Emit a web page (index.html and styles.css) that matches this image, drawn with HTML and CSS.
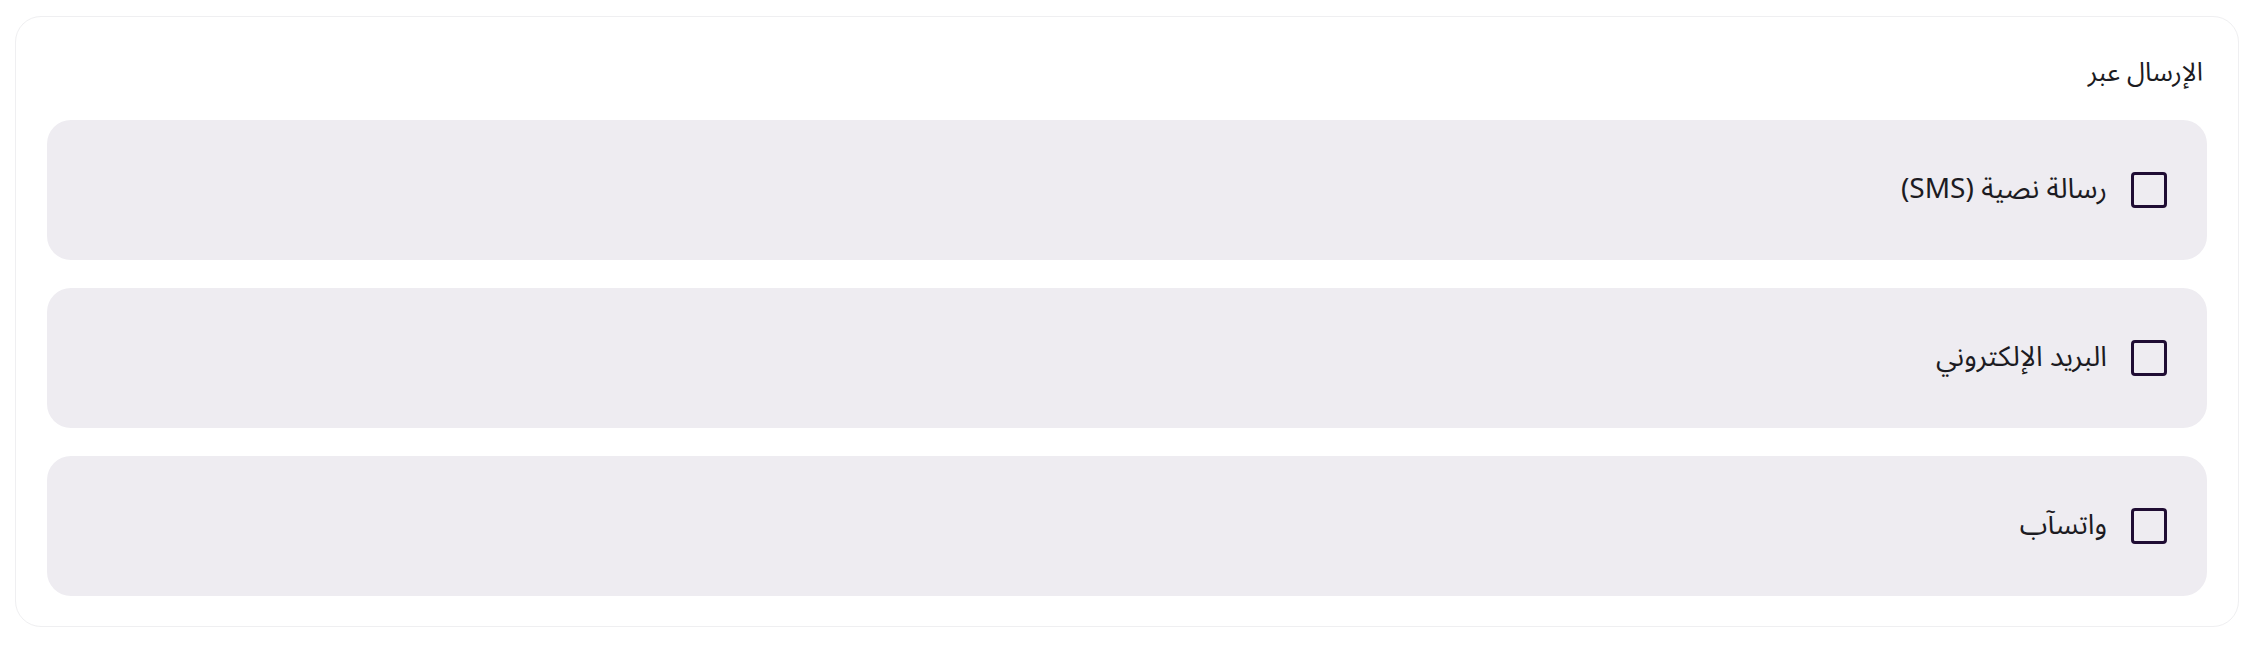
FILE: index.html
```html
<!DOCTYPE html>
<html lang="ar" dir="rtl">
<head>
  <meta charset="UTF-8" />
  <meta name="viewport" content="width=device-width, initial-scale=1" />
  <title>الإرسال عبر</title>
  <link rel="stylesheet" href="styles.css">
</head>
<body>
  <section class="card">
    <h3 class="card-title">الإرسال عبر</h3>

    <label class="channel">
      <input type="checkbox" name="channel" value="sms" />
      <span class="channel-name">رسالة نصية (SMS)</span>
    </label>

    <label class="channel">
      <input type="checkbox" name="channel" value="email" />
      <span class="channel-name">البريد الإلكتروني</span>
    </label>

    <label class="channel">
      <input type="checkbox" name="channel" value="whatsapp" />
      <span class="channel-name">واتسآب</span>
    </label>
  </section>
</body>
</html>
```

FILE: styles.css
```css
body {
  font-family: 'Noto Sans Arabic', 'Noto Sans', 'DejaVu Sans', sans-serif;
  background-color: #fff;
  margin: 0;
  padding: 16px 15px;
  color: #1c1b22;
}

.card {
  border: 1px solid #efeff1;
  border-radius: 26px;
  padding: 38px 31px 30px;
  display: flex;
  flex-direction: column;
  gap: 28px;
}

.card-title {
  margin: 0;
  padding: 0 4px;
  font-size: 26px;
  font-weight: 400;
  line-height: 36px;
  margin-bottom: 1px;
}

.channel {
  display: flex;
  align-items: center;
  gap: 24px;
  height: 140px;
  padding: 0 40px;
  box-sizing: border-box;
  background-color: #eeecf1;
  border-radius: 24px;
  cursor: pointer;
  user-select: none;
}

.channel input[type="checkbox"] {
  appearance: none;
  margin: 0;
  width: 36px;
  height: 36px;
  border: 3.5px solid #1f0c33;
  border-radius: 4px;
  background: transparent;
  cursor: pointer;
  flex-shrink: 0;
}

.channel input[type="checkbox"]:checked {
  background-color: #1f0c33;
}

.channel-name {
  font-size: 28px;
  line-height: 36px;
}
```
